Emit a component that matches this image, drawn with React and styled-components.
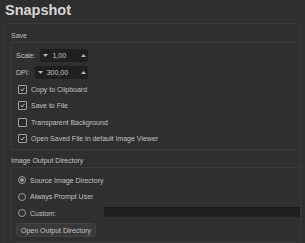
import React from "react";
import styled, { createGlobalStyle } from "styled-components";

const Global = createGlobalStyle`
  html, body { margin: 0; padding: 0; background: #2f2f2f; overflow: hidden; }
  body { font-family: "Liberation Sans", Arial, sans-serif; }
`;

const Page = styled.div`
  width: 305px;
  height: 243px;
  background: #2f2f2f;
  color: #c2c2c2;
  font-size: 7px;
  overflow: hidden;
`;

const Title = styled.h1`
  margin: 0 0 3px 5px;
  font-size: 14.5px;
  line-height: 20px;
  font-weight: bold;
  color: #d6d6d6;
`;

const Frame = styled.div`
  margin-left: 3px;
  width: 298px;
  box-sizing: border-box;
  border: 1px solid #3a3a3a;
  border-bottom: none;
  border-radius: 3px 3px 0 0;
  padding: 6px 0 40px 6px;
`;

const SectionLabel = styled.div`
  line-height: 12px;
  height: 12px;
  padding-left: 1px;
  margin-top: ${(p) => p.$top || 0}px;
`;

const Group = styled.div`
  border: 1px solid #3a3a3a;
  border-right: none;
  border-radius: 3px 0 0 3px;
  padding: ${(p) => p.$pad};
  display: flex;
  flex-direction: column;
`;

const FieldRow = styled.div`
  display: flex;
  align-items: center;
  gap: 5px;
  width: 72px;
  height: 13px;
  margin-bottom: ${(p) => p.$mb || 0}px;
`;

const FieldLabel = styled.span`
  white-space: nowrap;
`;

const Spin = styled.div`
  flex: 1;
  height: 13px;
  background: #1f1f1f;
  border-radius: 2px;
  display: flex;
  align-items: center;
  padding: 0 2px 0 3px;
  gap: 4px;
  box-sizing: border-box;
`;

const SpinValue = styled.span`
  flex: 1;
  color: #cbcbcb;
`;

const Arrow = styled.svg`
  width: 5px;
  height: 3px;
  flex: none;
`;

const CheckRow = styled.label`
  display: flex;
  align-items: center;
  height: 16.5px;
  margin-left: 2px;
  gap: 4px;
  white-space: nowrap;
`;

const Box = styled.span`
  width: 7px;
  height: 7px;
  border: 1px solid #a2a2a2;
  border-radius: 1px;
  background: #2a2a2a;
  display: flex;
  align-items: center;
  justify-content: center;
  flex: none;
`;

const Radio = styled.span`
  width: 6px;
  height: 6px;
  border: 1px solid #9a9a9a;
  border-radius: 50%;
  display: flex;
  align-items: center;
  justify-content: center;
  flex: none;
  &::after {
    content: "";
    width: 4px;
    height: 4px;
    border-radius: 50%;
    background: ${(p) => (p.$on ? "#979797" : "transparent")};
  }
`;

const CustomInput = styled.div`
  margin-left: auto;
  width: 196px;
  height: 10px;
  background: #202020;
  border-top: 1px solid #1b1b1b;
  box-sizing: border-box;
  align-self: center;
  margin-top: -2px;
`;

const Button = styled.button`
  align-self: flex-start;
  margin-top: 2px;
  height: 14px;
  width: 80px;
  padding: 0;
  font-family: "Liberation Sans", Arial, sans-serif;
  font-size: 7px;
  color: #c4c4c4;
  background: #393939;
  border: 1px solid #424242;
  border-radius: 3px;
`;

const Down = () => (
  <Arrow viewBox="0 0 5 3">
    <path d="M0 0H5L2.5 3Z" fill="#b8b8b8" />
  </Arrow>
);
const Up = () => (
  <Arrow viewBox="0 0 5 3">
    <path d="M0 3H5L2.5 0Z" fill="#b8b8b8" />
  </Arrow>
);

const Check = ({ on, children }) => (
  <CheckRow>
    <Box>
      {on && (
        <svg width="5" height="5" viewBox="0 0 5 5">
          <path d="M0.5 2.5L2 4L4.5 0.8" stroke="#c0c0c0" strokeWidth="1" fill="none" />
        </svg>
      )}
    </Box>
    {children}
  </CheckRow>
);

export default function App() {
  return (
    <Page>
      <Global />
      <Title>Snapshot</Title>
      <Frame>
        <SectionLabel>Save</SectionLabel>
        <Group $pad="6px 0 2px 5px">
          <FieldRow $mb={4}>
            <FieldLabel>Scale:</FieldLabel>
            <Spin>
              <Down />
              <SpinValue>1,00</SpinValue>
              <Up />
            </Spin>
          </FieldRow>
          <FieldRow $mb={2}>
            <FieldLabel>DPI:</FieldLabel>
            <Spin>
              <Down />
              <SpinValue>300,00</SpinValue>
              <Up />
            </Spin>
          </FieldRow>
          <Check on>Copy to Clipboard</Check>
          <Check on>Save to File</Check>
          <Check>Transparent Background</Check>
          <Check on>Open Saved File in default Image Viewer</Check>
        </Group>
        <SectionLabel $top={5}>Image Output Directory</SectionLabel>
        <Group $pad="3.75px 0 4px 5px">
          <CheckRow>
            <Radio $on />
            Source Image Directory
          </CheckRow>
          <CheckRow>
            <Radio />
            Always Prompt User
          </CheckRow>
          <CheckRow>
            <Radio />
            Custom:
            <CustomInput />
          </CheckRow>
          <Button>Open Output Directory</Button>
        </Group>
      </Frame>
    </Page>
  );
}
